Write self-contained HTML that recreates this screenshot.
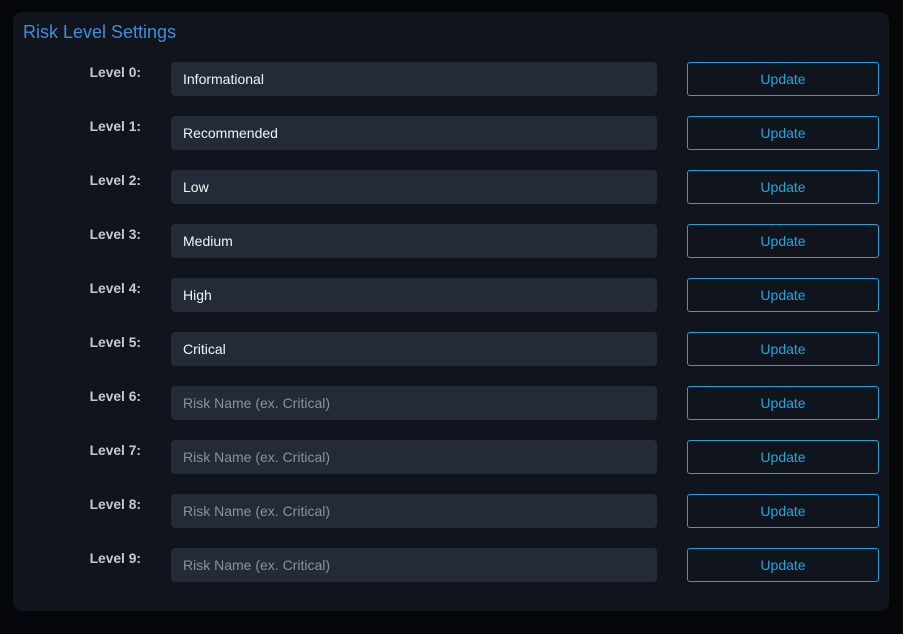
<!DOCTYPE html>
<html><head><style>
body{margin:0;background:#04060a;width:903px;height:634px;font-family:"Liberation Sans",sans-serif;overflow:hidden}
.panel{position:absolute;left:13px;top:12px;width:876px;height:599px;background:#10141d;border-radius:9px}
h1{position:absolute;left:10px;top:10px;margin:0;font-weight:normal;font-size:18px;color:#3d8fdc}
.row{position:absolute;left:0;width:876px;height:34px}
.lbl{position:absolute;right:748px;top:3px;font-weight:bold;font-size:13.8px;color:#c6cad0}
.inp{position:absolute;left:158px;top:0;width:486px;height:34px;background:#222b36;border-radius:4px;color:#f2f4f6;font-size:14px;line-height:34px;padding-left:12px;box-sizing:border-box}
.inp.ph{color:#8a929c}
.btn{position:absolute;left:674px;top:0;width:192px;height:34px;border:1px solid #19a6d8;border-radius:3px;box-sizing:border-box;color:#20a8dc;font-size:14px;text-align:center;line-height:32px}
</style></head><body><div class="panel"><h1>Risk Level Settings</h1>
<div class="row" style="top:50px"><div class="lbl">Level 0:</div><div class="inp">Informational</div><div class="btn">Update</div></div>
<div class="row" style="top:104px"><div class="lbl">Level 1:</div><div class="inp">Recommended</div><div class="btn">Update</div></div>
<div class="row" style="top:158px"><div class="lbl">Level 2:</div><div class="inp">Low</div><div class="btn">Update</div></div>
<div class="row" style="top:212px"><div class="lbl">Level 3:</div><div class="inp">Medium</div><div class="btn">Update</div></div>
<div class="row" style="top:266px"><div class="lbl">Level 4:</div><div class="inp">High</div><div class="btn">Update</div></div>
<div class="row" style="top:320px"><div class="lbl">Level 5:</div><div class="inp">Critical</div><div class="btn">Update</div></div>
<div class="row" style="top:374px"><div class="lbl">Level 6:</div><div class="inp ph">Risk Name (ex. Critical)</div><div class="btn">Update</div></div>
<div class="row" style="top:428px"><div class="lbl">Level 7:</div><div class="inp ph">Risk Name (ex. Critical)</div><div class="btn">Update</div></div>
<div class="row" style="top:482px"><div class="lbl">Level 8:</div><div class="inp ph">Risk Name (ex. Critical)</div><div class="btn">Update</div></div>
<div class="row" style="top:536px"><div class="lbl">Level 9:</div><div class="inp ph">Risk Name (ex. Critical)</div><div class="btn">Update</div></div>
</div></body></html>
